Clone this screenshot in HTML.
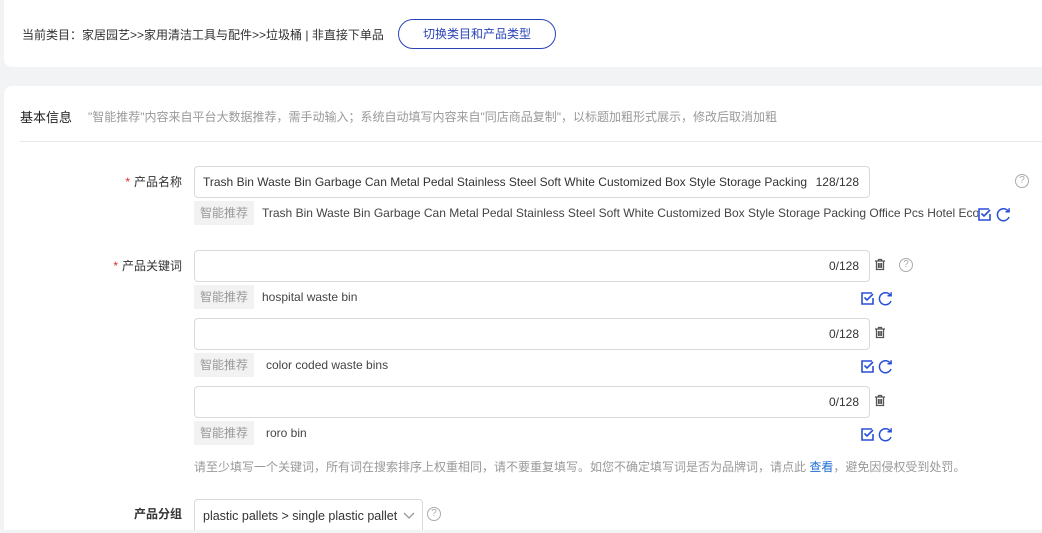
<!DOCTYPE html>
<html style="overflow:hidden;height:533px"><head><meta charset="utf-8"><style>
*{margin:0;padding:0;box-sizing:border-box}
body{width:1042px;height:533px;overflow:hidden;background:#f2f3f5;font-family:"Liberation Sans","Noto Sans CJK SC",sans-serif;font-size:12px;color:#333;position:relative}
.a{position:absolute;white-space:nowrap}
.card{position:absolute;background:#fff;border-radius:8px}
.inp{position:absolute;border:1px solid #d9d9d9;border-radius:4px;background:#fff;height:32px}
.tag{position:absolute;background:#f2f2f2;color:#999;height:24px;line-height:24px;padding:0 6px;font-size:12px}
.lbl{position:absolute;text-align:right;width:90px;color:#333;font-size:12px}
.star{color:#e0282e;margin-right:4px}
.cnt{position:absolute;right:10px;top:8px;color:#333}
.q{position:absolute;width:14px;height:14px;border:1px solid #aaa;border-radius:50%;color:#aaa;font-size:10px;line-height:12px;text-align:center}
</style></head><body>
<div class="card" style="left:4px;top:0;width:1045px;height:67px;border-radius:0 0 8px 8px"></div>
<div class="a" style="left:22px;top:26px;color:#333">当前类目：家居园艺&gt;&gt;家用清洁工具与配件&gt;&gt;垃圾桶 | 非直接下单品</div>
<div class="a" style="left:398px;top:19px;width:158px;height:30px;border:1px solid #2a44b8;border-radius:15px;color:#2a44b8;text-align:center;line-height:28px">切换类目和产品类型</div>

<div class="card" style="left:4px;top:86px;width:1045px;height:444px;border-radius:8px 8px 0 0"></div>
<div class="a" style="left:20px;top:107px;font-size:13px;color:#222">基本信息</div>
<div class="a" style="left:88px;top:108px;color:#999">"智能推荐"内容来自平台大数据推荐，需手动输入；系统自动填写内容来自"同店商品复制"，以标题加粗形式展示，修改后取消加粗</div>
<div class="a" style="left:20px;top:141px;width:1022px;height:1px;background:#e8e8e8"></div>

<div class="lbl" style="left:92px;top:173px"><span class="star">*</span>产品名称</div>
<div class="inp" style="left:194px;top:166px;width:676px"><span class="a" style="left:8px;top:8px">Trash Bin Waste Bin Garbage Can Metal Pedal Stainless Steel Soft White Customized Box Style Storage Packing</span><span class="cnt">128/128</span></div>
<div class="q" style="left:1015px;top:174px">?</div>
<div class="tag" style="left:194px;top:201px">智能推荐</div>
<div class="a" style="left:262px;top:206px;color:#444;width:716px;overflow:hidden">Trash Bin Waste Bin Garbage Can Metal Pedal Stainless Steel Soft White Customized Box Style Storage Packing Office Pcs Hotel Eco</div>

<div class="lbl" style="left:92px;top:257px"><span class="star">*</span>产品关键词</div>
<div class="inp" style="left:194px;top:250px;width:676px"><span class="cnt">0/128</span></div>
<div class="q" style="left:899px;top:258px">?</div>
<div class="tag" style="left:194px;top:285px">智能推荐</div>
<div class="a" style="left:262px;top:290px;color:#444">hospital waste bin</div>

<div class="inp" style="left:194px;top:318px;width:676px"><span class="cnt">0/128</span></div>
<div class="tag" style="left:194px;top:353px">智能推荐</div>
<div class="a" style="left:266px;top:358px;color:#444">color coded waste bins</div>

<div class="inp" style="left:194px;top:386px;width:676px"><span class="cnt">0/128</span></div>
<div class="tag" style="left:194px;top:421px">智能推荐</div>
<div class="a" style="left:266px;top:426px;color:#444">roro bin</div>

<div class="a" style="left:194px;top:458px;color:#999">请至少填写一个关键词，所有词在搜索排序上权重相同，请不要重复填写。如您不确定填写词是否为品牌词，请点此 <span style="color:#1f6fd1">查看</span>，避免因侵权受到处罚。</div>

<div class="lbl" style="left:92px;top:505px;font-weight:bold">产品分组</div>
<div class="inp" style="left:194px;top:499px;width:229px;height:34px"><span class="a" style="left:8px;top:9px;font-size:12.5px;color:#333">plastic pallets &gt; single plastic pallet</span>
<svg class="a" style="left:208px;top:12px" width="12" height="8" viewBox="0 0 12 8"><path d="M1 1l5 5 5-5" fill="none" stroke="#999" stroke-width="1.3"/></svg></div>
<div class="q" style="left:427px;top:507px">?</div>
<div class="a" style="left:0;top:530px;width:1042px;height:3px;background:#f2f3f5"></div>

<svg width="0" height="0" style="position:absolute"><defs>
<g id="ck"><path d="M12 2H2v11h11V7" fill="none" stroke="#2a4fd6" stroke-width="1.6"/><path d="M4.5 6.5l2.5 2.5 6-6" fill="none" stroke="#2a4fd6" stroke-width="1.6"/></g>
<g id="rf"><path d="M12.5 4.5A6 6 0 1 0 13 10" fill="none" stroke="#2a4fd6" stroke-width="1.5"/><path d="M9.5 4.8h3.6V1.2" fill="none" stroke="#2a4fd6" stroke-width="1.5"/></g>
<g id="tr"><path d="M1 3h10M4.5 3V1.5h3V3M2.5 3.5v8h7v-8M4.5 5v5M6 5v5M7.5 5v5" fill="none" stroke="#555" stroke-width="1.3"/></g>
</defs></svg>
<svg class="a" style="left:977px;top:207px" width="15" height="15"><use href="#ck"/></svg>
<svg class="a" style="left:996px;top:207px" width="15" height="15"><use href="#rf"/></svg>
<svg class="a" style="left:860px;top:291px" width="15" height="15"><use href="#ck"/></svg>
<svg class="a" style="left:878px;top:291px" width="15" height="15"><use href="#rf"/></svg>
<svg class="a" style="left:860px;top:359px" width="15" height="15"><use href="#ck"/></svg>
<svg class="a" style="left:878px;top:359px" width="15" height="15"><use href="#rf"/></svg>
<svg class="a" style="left:860px;top:427px" width="15" height="15"><use href="#ck"/></svg>
<svg class="a" style="left:878px;top:427px" width="15" height="15"><use href="#rf"/></svg>
<svg class="a" style="left:874px;top:258px" width="12" height="13"><use href="#tr"/></svg>
<svg class="a" style="left:874px;top:326px" width="12" height="13"><use href="#tr"/></svg>
<svg class="a" style="left:874px;top:394px" width="12" height="13"><use href="#tr"/></svg>
</body></html>
